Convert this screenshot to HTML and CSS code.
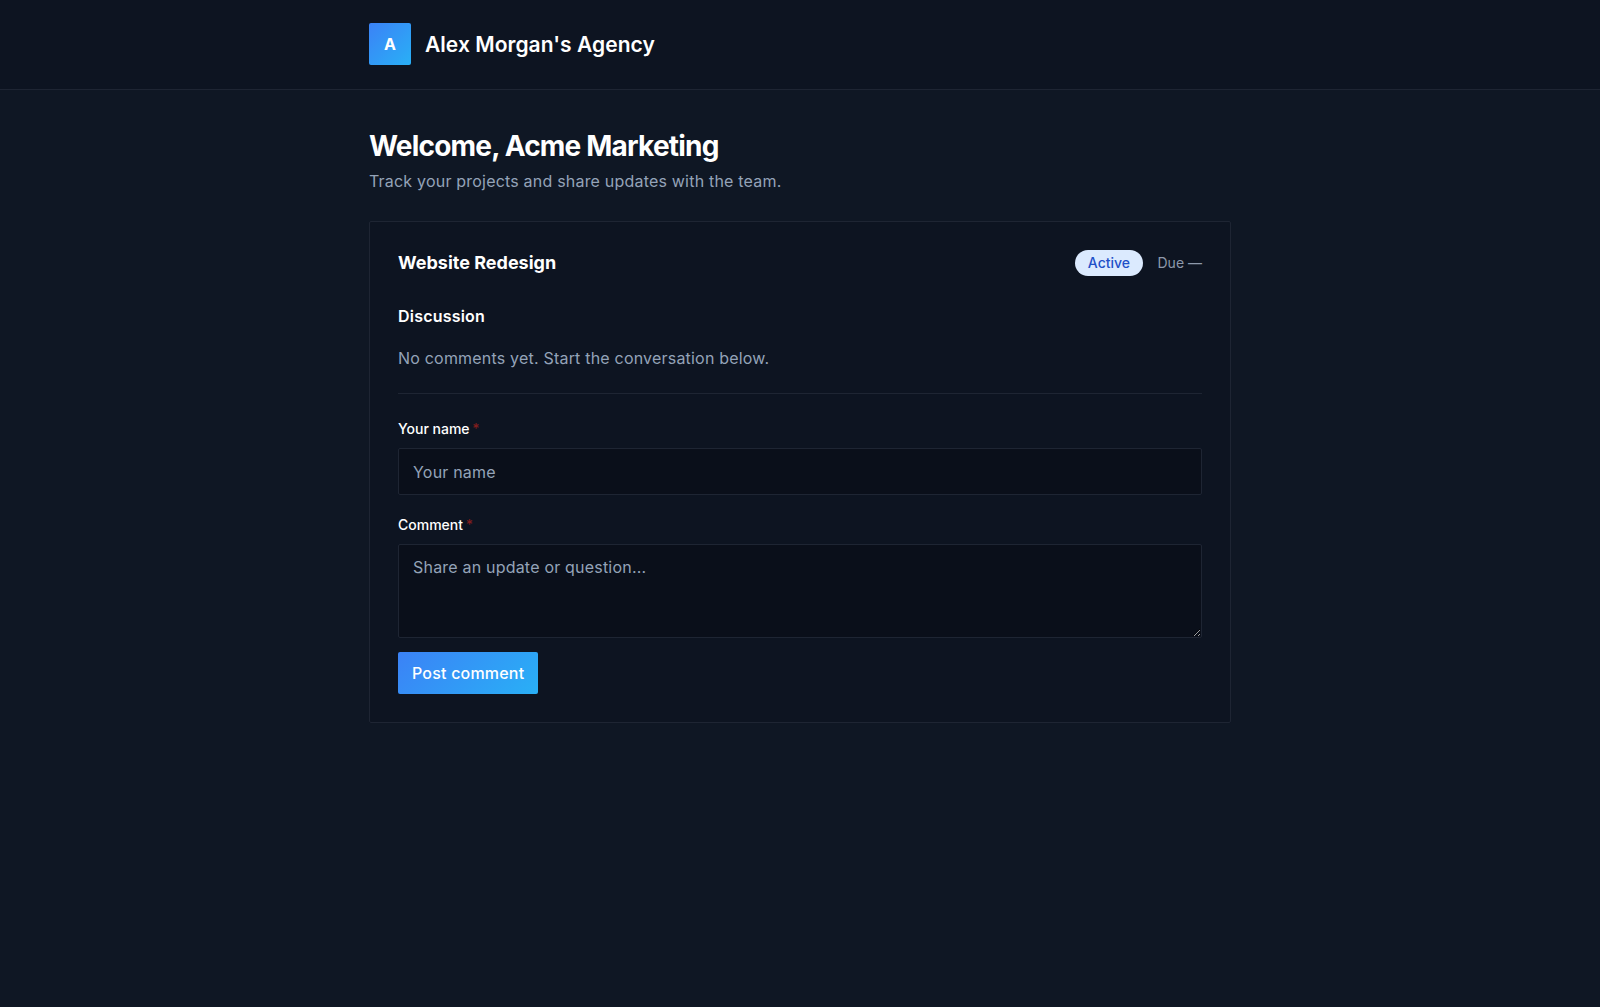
FILE: index.html
```html
<!DOCTYPE html>
<html lang="en">
<head>
<meta charset="utf-8">
<title>Alex Morgan's Agency</title>
<link rel="stylesheet" href="styles.css">
</head>
<body>
<header class="topbar">
  <div class="wrap brand">
    <div class="logo">A</div>
    <div class="brand-name">Alex Morgan's Agency</div>
  </div>
</header>
<main class="wrap content">
  <h1 class="title">Welcome, Acme Marketing</h1>
  <p class="subtitle">Track your projects and share updates with the team.</p>
  <section class="card">
    <div class="card-head">
      <h2 class="project">Website Redesign</h2>
      <div class="meta">
        <span class="badge">Active</span>
        <span class="due">Due —</span>
      </div>
    </div>
    <h3 class="section-title">Discussion</h3>
    <p class="empty">No comments yet. Start the conversation below.</p>
    <form class="form">
      <label class="label" for="name">Your name <span class="req">*</span></label>
      <input class="field input" id="name" type="text" placeholder="Your name">
      <label class="label" for="comment">Comment <span class="req">*</span></label>
      <textarea class="field textarea" id="comment" placeholder="Share an update or question..."></textarea>
      <button class="btn" type="button">Post comment</button>
    </form>
  </section>
</main>
</body>
</html>
```
FILE: styles.css
```css
* { box-sizing: border-box; }
html, body { margin: 0; height: 100%; }
body {
  background: #0f1724;
  color: #fff;
  font-family: Inter, "Liberation Sans", sans-serif;
  overflow: hidden;
}
.wrap { width: 862px; margin: 0 auto; }
.topbar {
  background: #0d1421;
  border-bottom: 1px solid #1e2533;
  height: 90px;
  padding-top: 23px;
}
.brand { display: flex; align-items: center; gap: 14px; }
.logo {
  width: 42px; height: 42px;
  border-radius: 2px;
  background: linear-gradient(135deg, #3b82f6, #29b0f6);
  display: flex; align-items: center; justify-content: center;
  font-size: 16px; font-weight: 700;
}
.brand-name { font-size: 21px; font-weight: 600; letter-spacing: 0.05px; }
.content { padding-top: 41px; }
.title { margin: 0; font-size: 28px; line-height: 30px; font-weight: 700; letter-spacing: -0.8px; }
.subtitle { margin: 8px 0 0; font-size: 16px; line-height: 24px; color: #94a3b8; letter-spacing: 0.2px; }
.card {
  margin-top: 28px;
  background: #0d1421;
  border: 1px solid #1e2533;
  border-radius: 2px;
  padding: 28px;
}
.card-head { display: flex; justify-content: space-between; align-items: center; height: 26px; }
.project { margin: 0; font-size: 18px; line-height: 24px; font-weight: 700; letter-spacing: 0; }
.meta { display: flex; align-items: center; gap: 15px; }
.badge {
  background: #dbeafe; color: #1e50c8;
  font-size: 14px; font-weight: 500;
  line-height: 26px; height: 26px;
  padding: 0 12.5px;
  border-radius: 13px;
}
.due { font-size: 14px; line-height: 24px; margin-bottom: 1px; color: #8d99ab; }
.section-title { margin: 27px 0 0; font-size: 16px; line-height: 26px; font-weight: 600; letter-spacing: 0.2px; }
.empty {
  margin: 16px 0 0; padding-bottom: 22px;
  font-size: 16px; line-height: 26px; color: #94a3b8; letter-spacing: 0.2px;
  border-bottom: 1px solid #1e2533;
}
.form { display: flex; flex-direction: column; align-items: flex-start; }
.label { margin-top: 25px; font-size: 14px; line-height: 20px; font-weight: 500; }
.label + .field { margin-top: 9px; }
.req { color: #7f1d1d; margin-left: -1px; }
.field {
  display: block; width: 100%;
  background: #0a0f1a;
  border: 1px solid #1e2533;
  border-radius: 2px;
  color: #fff;
  font-family: inherit; font-size: 16px; letter-spacing: 0.2px;
  padding: 0 14px;
}
.field::placeholder { color: #94a3b8; opacity: 1; }
.input { height: 47px; }
.input + .label { margin-top: 20px; }
.textarea { height: 94px; padding-top: 10px; padding-bottom: 10px; line-height: 24px; resize: vertical; }
.btn {
  margin-top: 14px;
  height: 42px;
  padding: 0 14px;
  border: 0;
  border-radius: 2px;
  background: linear-gradient(135deg, #3b82f6, #29b0f6);
  color: #fff;
  font-family: inherit; font-size: 16px; font-weight: 500; letter-spacing: 0.2px;
}
```
